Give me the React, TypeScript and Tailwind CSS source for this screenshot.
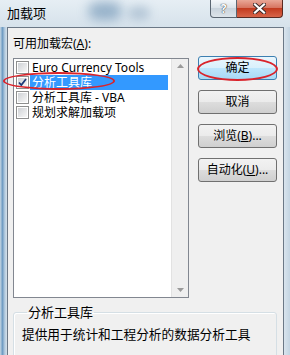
import React from 'react';

interface Item {
    label: string;
    checked: boolean;
    selected: boolean;
}

const items: Item[] = [
    { label: 'Euro Currency Tools', checked: false, selected: false },
    { label: '分析工具库', checked: true, selected: true },
    { label: '分析工具库 - VBA', checked: false, selected: false },
    { label: '规划求解加载项', checked: false, selected: false },
];

function CheckBox({ checked }: { checked: boolean }) {
    return (
        <div className="w-[13px] h-[13px] shrink-0 border border-[#8e8f8f] bg-white p-[1px]">
            <div className="relative w-full h-full bg-[linear-gradient(135deg,#cfd2d6,#f7f7f7)]">
                {checked && (
                    <svg className="absolute -left-[1px] -top-[1px]" width="11" height="11" viewBox="0 0 11 11">
                        <path d="M2 5.5 L4.3 8 L9 2" fill="none" stroke="#1c3a78" strokeWidth="1.8" />
                    </svg>
                )}
            </div>
        </div>
    );
}

function WinButton({ children, primary }: { children: React.ReactNode; primary?: boolean }) {
    return (
        <div
            className={
                primary
                    ? 'h-[24px] w-[79px] rounded-[3px] border border-[#3c7fb1] bg-[linear-gradient(to_bottom,#eaf6fd,#d9f0fc_50%,#bee6fd_50%,#a7d9f5)] flex items-center justify-center leading-none'
                    : 'h-[24px] w-[79px] rounded-[3px] border border-[#707070] bg-[linear-gradient(to_bottom,#f2f2f2,#ebebeb_50%,#dddddd_50%,#cfcfcf)] flex items-center justify-center leading-none'
            }
        >
            {children}
        </div>
    );
}

export default function App() {
    return (
        <div className="relative w-[290px] h-[355px] overflow-hidden bg-[#c8d8e5] font-['Noto_Sans','Noto_Sans_CJK_SC',sans-serif] text-[12px] text-black">
            {/* Title bar */}
            <div className="relative h-[27px] bg-[linear-gradient(to_bottom,#e6eef4,#d6e2eb)] overflow-hidden">
                <div className="absolute left-[88px] top-[2px] w-[34px] h-[18px] rounded-full bg-[#4d7aa3] opacity-50 blur-[6px]" />
                <div className="absolute left-[128px] top-[6px] w-[22px] h-[14px] rounded-full bg-[#7a98b5] opacity-40 blur-[5px]" />
                <div className="absolute left-[7px] top-[4px] text-[13px] leading-[18px] text-black">加载项</div>
                {/* caption buttons */}
                <div className="absolute right-[7px] top-0 flex">
                    <div className="w-[27px] h-[18px] rounded-bl-[4px] border border-t-0 border-[#5b6672] bg-[linear-gradient(to_bottom,#f4f7fa,#d9e1e8_50%,#c9d3dc_50%,#dde4ea)] flex items-center justify-center text-[12px] font-bold text-white [text-shadow:0_0_1px_#333,0_0_1px_#333]">
                        ?
                    </div>
                    <div className="w-[46px] h-[18px] rounded-br-[4px] border border-l-0 border-t-0 border-[#5a2a22] bg-[linear-gradient(to_bottom,#e9a797,#d5705c_50%,#c23b20_50%,#d8654a)] flex items-center justify-center">
                        <svg width="13" height="11" viewBox="0 0 13 11">
                            <path d="M2 1.5 L11 9.5 M11 1.5 L2 9.5" stroke="#3b2a2a" strokeWidth="4" strokeLinecap="square" />
                            <path d="M2 1.5 L11 9.5 M11 1.5 L2 9.5" stroke="#ffffff" strokeWidth="2.2" strokeLinecap="square" />
                        </svg>
                    </div>
                </div>
            </div>

            <div className="flex h-[328px]">
                {/* left frame */}
                <div className="w-[7px] bg-[linear-gradient(to_right,#c6d7e4,#6f9cc3_35%,#b7cde0_70%,#d3e0ea)]" />

                {/* client area */}
                <div className="w-[277px] bg-[#f0f0f0] border-l border-t border-r border-[#6b7886] pl-[5px] pt-[9px]">
                    <div className="flex">
                        <div className="w-[176px]">
                            <div className="h-[14px] leading-[14px]">
                                可用加载宏(<span className="underline">A</span>):
                            </div>
                            <div className="mt-[7px] h-[240px] border border-[#828790] bg-white flex">
                                <div className="flex-1 pt-[1px]">
                                    {items.map((item) => (
                                        <div key={item.label} className="h-[15px] flex items-center pl-[2px]">
                                            <CheckBox checked={item.checked} />
                                            <div
                                                className={
                                                    item.selected
                                                        ? 'ml-[1px] flex-1 h-[15px] bg-[#3399ff] text-white pl-[2px] leading-[15px] whitespace-nowrap'
                                                        : 'ml-[1px] flex-1 h-[15px] pl-[2px] leading-[15px] whitespace-nowrap'
                                                }
                                            >
                                                {item.label}
                                            </div>
                                        </div>
                                    ))}
                                </div>
                                <div className="w-[17px] ml-[3px] bg-[#efefef] border-l border-[#e2e2e2] flex flex-col items-center justify-between py-[5px]">
                                    <svg width="7" height="4" viewBox="0 0 7 4">
                                        <path d="M0 4 L3.5 0 L7 4 Z" fill="#9a9a9a" />
                                    </svg>
                                    <svg width="7" height="4" viewBox="0 0 7 4">
                                        <path d="M0 0 L7 0 L3.5 4 Z" fill="#9a9a9a" />
                                    </svg>
                                </div>
                            </div>
                        </div>

                        <div className="ml-[9px] pt-[19px] flex flex-col gap-[10px]">
                            <WinButton primary>确定</WinButton>
                            <WinButton>取消</WinButton>
                            <WinButton>
                                浏览(<span className="underline">B</span>)...
                            </WinButton>
                            <WinButton>
                                自动化(<span className="underline">U</span>)...
                            </WinButton>
                        </div>
                    </div>

                    {/* description group */}
                    <fieldset className="mt-[6px] w-[264px] h-[70px] border border-[#d5dfe5] rounded-[3px] pl-[8px] shadow-[inset_1px_1px_0_#ffffff]">
                        <legend className="ml-[5px] px-[1px] leading-[16px] text-[13px]">分析工具库</legend>
                        <div className="pt-[6px] leading-[16px] text-[12.7px]">提供用于统计和工程分析的数据分析工具</div>
                    </fieldset>
                </div>

                {/* right frame */}
                <div className="flex-1 bg-[linear-gradient(to_right,#d9e4ed,#c3d4e2)]" />
            </div>

            {/* red annotation ellipses */}
            <div className="absolute left-[3px] top-[72px] w-[112px] h-[18px] rounded-[50%] border-2 border-[#d9232b]" />
            <div className="absolute left-[197px] top-[57px] w-[81px] h-[24px] rounded-[50%] border-2 border-[#d9232b]" />
        </div>
    );
}
